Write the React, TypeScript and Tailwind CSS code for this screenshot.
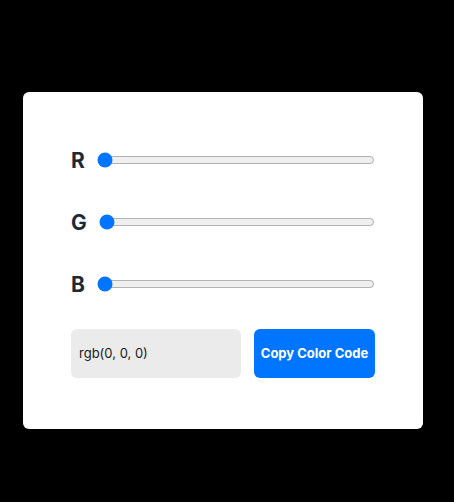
import { useState } from "react";

const CHANNELS = ["R", "G", "B"] as const;

export default function App() {
  const [rgb, setRgb] = useState<Record<string, number>>({ R: 0, G: 0, B: 0 });
  const code = `rgb(${rgb.R}, ${rgb.G}, ${rgb.B})`;

  return (
    <div
      className="min-h-screen w-full bg-black pt-[92px] pl-[23px]"
      style={{ fontFamily: "Inter, 'Noto Sans', sans-serif" }}
    >
      <div className="w-[400px] rounded-md bg-white px-12 pt-[49px] pb-[51px]">
        {/* Sliders */}
        <div className="flex flex-col gap-6">
          {CHANNELS.map((c) => (
            <div key={c} className="flex h-[38px] items-center gap-[12px]">
              <span className="text-[21px] font-bold leading-none text-[#1c2a38]">{c}</span>
              <input
                type="range"
                min={0}
                max={255}
                value={rgb[c]}
                onChange={(e) => setRgb({ ...rgb, [c]: Number(e.target.value) })}
                className="flex-1"
              />
            </div>
          ))}
        </div>

        {/* Output */}
        <div className="mt-[26px] flex h-[49px] gap-[13px]">
          <input
            readOnly
            value={code}
            className="w-[170px] rounded-md bg-[#ebebeb] px-2 text-[13px] text-[#1a1a1a] outline-none"
          />
          <button className="flex-1 rounded-md bg-[#0075ff] text-[13px] font-bold text-white">
            Copy Color Code
          </button>
        </div>
      </div>
    </div>
  );
}
